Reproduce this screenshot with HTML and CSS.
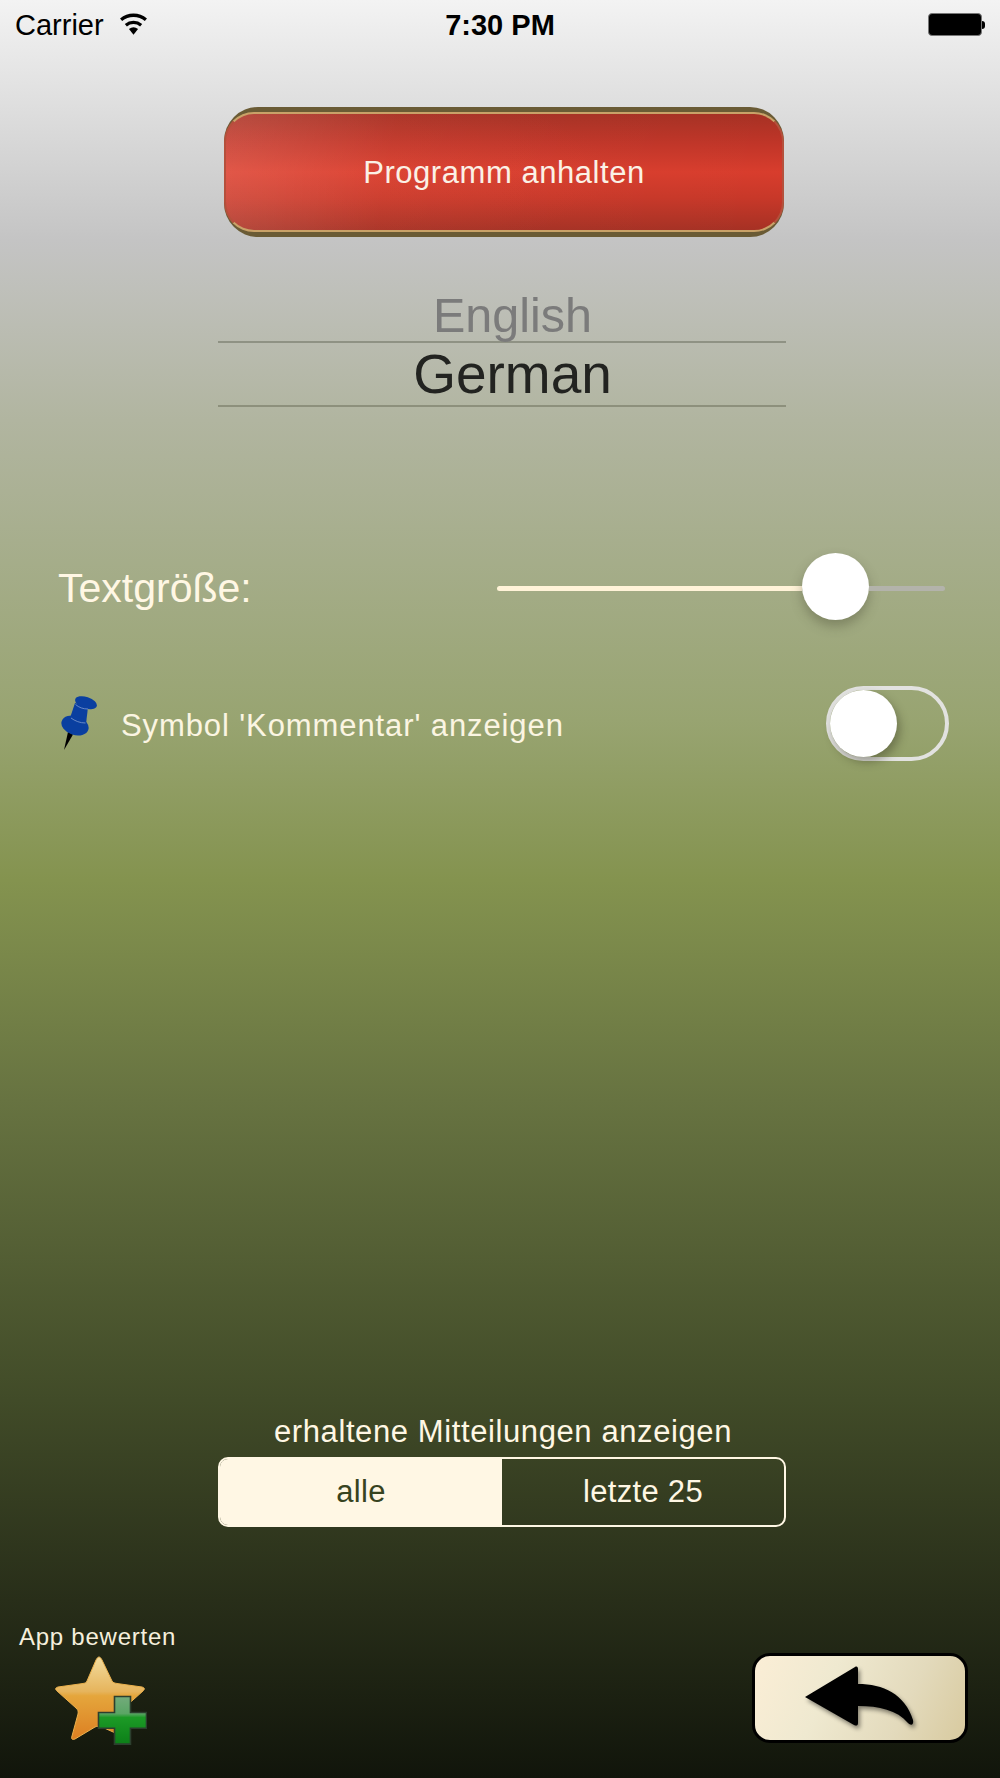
FILE: index.html
```html
<!DOCTYPE html>
<html>
    <head>
        <meta charset="utf-8">
        <title>Einstellungen</title>
        <link rel="stylesheet" href="styles.css">
    </head>
    <body>
        <header class="statusbar">
            <div class="status-left">
                <span>Carrier</span>
                <svg class="wifi" viewBox="0 0 30 22">
                    <path d="M15 22 10.6 16.4A7 7 0 0 1 19.4 16.4Z" fill="#000"/>
                    <path d="M7.6 12.6A11.6 11.6 0 0 1 22.4 12.6" fill="none" stroke="#000" stroke-width="3.2"/>
                    <path d="M3 7.4A18.6 18.6 0 0 1 27 7.4" fill="none" stroke="#000" stroke-width="3.2"/>
                </svg>
            </div>
            <div class="status-time">7:30 PM</div>
            <div class="battery"><span class="battery-body"></span><span class="battery-tip"></span></div>
        </header>
        <main>
            <div class="stop-button"><div class="stop-face">Programm anhalten</div></div>

            <div class="picker">
                <div class="picker-row picker-off">English</div>
                <div class="picker-row picker-on">German</div>
            </div>

            <div class="size-row">
                <span class="size-label">Textgröße:</span>
                <div class="slider">
                    <div class="slider-fill"></div>
                    <div class="slider-thumb"></div>
                    <div class="slider-rest"></div>
                </div>
            </div>

            <div class="comment-row">
                <svg class="pin" viewBox="0 0 36 54">
                    <path d="M7 36 12 38.500 3 54Z" fill="#000"/>
                    <path d="M14 7 27 11 25 28 9 22Z" fill="#0a3fa0"/>
                    <ellipse cx="25" cy="6.700" rx="11.300" ry="5.800" transform="rotate(18 25 6.700)" fill="#0a3fa0"/>
                    <ellipse cx="14" cy="29.500" rx="14" ry="9.500" transform="rotate(18 14 29.500)" fill="#0a3fa0"/>
                    <path d="M14.500 8.500C18 11.500 22 13 27 13M10 22C14 25 19 27 24.500 27" fill="none" stroke="#7d9bd0" stroke-width=".8"/>
                </svg>
                <span class="comment-label">Symbol 'Kommentar' anzeigen</span>
                <div class="switch"><div class="switch-knob"></div></div>
            </div>

            <div class="spacer"></div>

            <div class="filter-label">erhaltene Mitteilungen anzeigen</div>
            <div class="segments">
                <div class="segment segment-on">alle</div>
                <div class="segment">letzte 25</div>
            </div>

            <footer class="bottom-row">
                <div class="rate">
                    <div class="rate-label">App bewerten</div>
                    <svg class="rate-icon" viewBox="0 0 92 90">
                        <defs>
                            <linearGradient id="starfill" x1="0" y1="0" x2="0" y2="1">
                                <stop offset="0" stop-color="#f2dc9e"/>
                                <stop offset=".42" stop-color="#e6b45c"/>
                                <stop offset=".47" stop-color="#e5a63c"/>
                                <stop offset="1" stop-color="#dc7f22"/>
                            </linearGradient>
                            <linearGradient id="plusfill" x1="0" y1="0" x2="0" y2="1">
                                <stop offset="0" stop-color="#73ab7c"/>
                                <stop offset=".36" stop-color="#5aa564"/>
                                <stop offset=".44" stop-color="#1c9a26"/>
                                <stop offset="1" stop-color="#0c7f18"/>
                            </linearGradient>
                        </defs>
                        <path d="M44 1C45 1 46 2 47 4L57 25C58 27 60 27 62 27.500L87 31C90 32 90 33 88 35L69 52C67 54 66 55 67 58L71 78C71 81 70 82 67 80L47 71C45 70 42 70 40 71L20 83C17 84 16 83 17 80L23 58C23.500 55 23 54 21 52L2 35C0 33 0 32 3 31L28 27.500C30 27 31 27 32 25L41 4C42 2 43 1 44 1Z" fill="url(#starfill)" stroke="#eab04c" stroke-width="1"/>
                        <path d="M60 42H76V58H92V74H76V90H60V74H44V58H60Z" transform="translate(-.5 -1) scale(1 .99)" fill="url(#plusfill)" stroke="#2c3f2e" stroke-width="1.600"/>
                    </svg>
                </div>
                <div class="back-button">
                    <svg class="back-arrow" viewBox="0 0 112 62">
                        <path d="M2 31 52 1C54 0 55 1 55 3V18C80 18 102 28 110 54 111 59 108 60 105 57 94 44 76 40 55 40V57C55 60 53 60 51 59Z" fill="#000"/>
                    </svg>
                </div>
            </footer>
        </main>
    </body>
</html>
```
FILE: styles.css
```css
html {height:100%;}
body {margin:0;height:1778px;overflow:hidden;color:#fff7e4;font-family:"Liberation Sans",Arial,sans-serif;background:linear-gradient(to bottom,#f3f3f3 0,#c4c4c4 240px,#b1b5a0 420px,#98a471 720px,#84934f 880px,#677341 1100px,#414b28 1400px,#282e19 1600px,#11150b 1778px);}

.statusbar {height:50px;position:relative;display:flex;justify-content:space-between;align-items:center;color:#000;font-size:29px;padding:0 15px 0 15px;box-sizing:border-box;}
.status-left {display:flex;align-items:center;gap:14px;}
.wifi {width:31px;height:23px;margin-top:-3px;}
.status-time {position:absolute;left:0;right:0;top:9px;text-align:center;font-weight:bold;font-size:29px;}
.battery {display:flex;align-items:center;margin-top:-1px;}
.battery-body {width:52px;height:21px;background:#000;border:1px solid #777;border-radius:4px;}
.battery-tip {width:3px;height:8px;background:#000;border-radius:0 3px 3px 0;}

main {display:flex;flex-direction:column;height:1728px;}

.stop-button {margin:57px 0 0 224px;width:560px;height:130px;border-radius:34px;background:#6a5b35;box-sizing:border-box;padding-top:5px;}
.stop-face {height:120px;border:2px solid #c9a268;border-left-color:#b5503c;border-right-color:#b5503c;border-radius:30px;box-sizing:border-box;display:flex;align-items:center;justify-content:center;color:#fbf1e6;font-size:31px;letter-spacing:.55px;padding-top:2px;background:radial-gradient(ellipse 70% 90% at 0 50%,rgba(255,110,90,.14),rgba(255,110,90,0)),linear-gradient(100deg,rgba(255,255,255,.12) 0,rgba(255,255,255,.02) 30%,rgba(0,0,0,0) 100%),linear-gradient(to bottom,#a63124 0,#c03528 25%,#d83d2d 50%,#c83829 72%,#a63124 100%);}

.picker {margin:51px 0 0 218px;width:568px;}
.picker-row {text-align:center;padding-left:21px;box-sizing:border-box;}
.picker-off {height:55px;line-height:54px;font-size:48.5px;color:#7b7b7b;border-bottom:2px solid #8f9284;}
.picker-on {height:64px;line-height:62px;font-size:55px;color:#222320;border-bottom:2px solid #8d907c;}

.size-row {margin:148px 0 0 58px;height:67px;display:flex;align-items:center;}
.size-label {width:439px;font-size:41px;}
.slider {width:448px;display:flex;align-items:center;}
.slider-fill {width:305px;height:5px;background:#fff3d8;border-radius:3px 0 0 3px;}
.slider-thumb {width:67px;height:67px;flex:none;border-radius:50%;background:#fff;box-shadow:0 6px 12px rgba(60,60,40,.35);margin-top:-5px;}
.slider-rest {flex:1;height:5px;background:#b3b3ab;border-radius:0 3px 3px 0;}

.comment-row {margin:64px 0 0 61px;height:75px;display:flex;align-items:center;}
.pin {width:36px;height:54px;margin-top:-2px;}
.comment-label {margin:0 0 0 24px;padding-top:4px;width:705px;font-size:31px;letter-spacing:.9px;color:#fbf5e2;}
.switch {width:123px;height:75px;box-sizing:border-box;border:4px solid #e2e2e0;border-radius:38px;position:relative;flex:none;}
.switch-knob {position:absolute;left:0;top:0;width:67px;height:67px;border-radius:50%;background:#fff;box-shadow:3px 5px 10px rgba(50,50,30,.4);}

.spacer {flex:1;}

.filter-label {text-align:center;font-size:31px;letter-spacing:.6px;margin-left:6px;line-height:36px;}
.segments {margin:7px 0 0 218px;width:568px;height:70px;box-sizing:border-box;border:2px solid #fff7e4;border-radius:10px;display:flex;overflow:hidden;}
.segment {flex:1;display:flex;align-items:center;justify-content:center;font-size:31px;letter-spacing:.3px;}
.segment-on {background:#fff7e4;color:#37431f;}

.bottom-row {margin:94px 0 35px;display:flex;justify-content:space-between;align-items:flex-end;padding:0 32px 0 19px;}
.rate-label {font-size:24px;letter-spacing:.75px;line-height:32px;color:#f5efdc;}
.rate-icon {display:block;width:92px;height:90px;margin:3px 0 -3px 36px;}
.back-button {width:216px;height:90px;box-sizing:border-box;border:3px solid #000;border-radius:18px;display:flex;align-items:center;justify-content:center;background:linear-gradient(115deg,#fbeed6 0,#efe9d0 35%,#e3dabc 70%,#d8ca9f 100%);}
.back-arrow {width:112px;height:62px;margin:-2px 0 0 -2px;filter:drop-shadow(2px 3px 2px rgba(0,0,0,.45));}
```
